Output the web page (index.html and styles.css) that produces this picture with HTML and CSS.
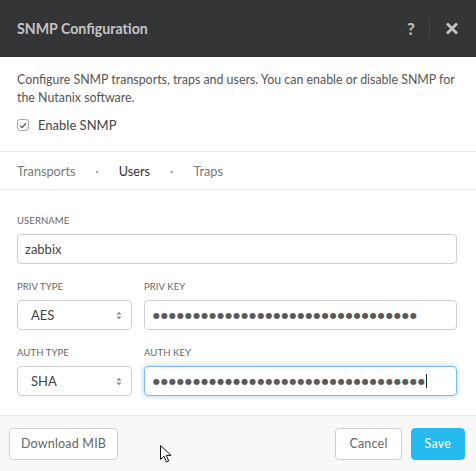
FILE: index.html
```html
<!DOCTYPE html>
<html>
<head>
<meta charset="utf-8">
<link rel="stylesheet" href="styles.css">
</head>
<body>
<div class="dialog">
  <div class="header">
    <div class="title">SNMP Configuration</div>
    <div class="actions">
      <span class="help">?</span>
      <span class="vsep"></span>
      <svg class="close" width="14" height="13" viewBox="0 0 14 13"><path d="M2 1.5 L12 11.5 M12 1.5 L2 11.5" stroke="#c4c5c7" stroke-width="2.8" stroke-linecap="butt"/></svg>
    </div>
  </div>
  <div class="intro">
    <p class="desc">Configure SNMP transports, traps and users. You can enable or disable SNMP for the Nutanix software.</p>
    <label class="check">
      <span class="box"><svg width="8" height="7" viewBox="0 0 8 7"><path d="M1 3.6 L3 5.6 L7 1.2" fill="none" stroke="#555" stroke-width="1.3"/></svg></span>
      <span>Enable SNMP</span>
    </label>
  </div>
  <div class="tabs">
    <span class="tab">Transports</span>
    <span class="dot">·</span>
    <span class="tab active">Users</span>
    <span class="dot">·</span>
    <span class="tab">Traps</span>
  </div>
  <div class="form">
    <div class="field">
      <div class="label">USERNAME</div>
      <div class="input">zabbix</div>
    </div>
    <div class="row">
      <div class="field small">
        <div class="label">PRIV TYPE</div>
        <div class="select"><span>AES</span><svg width="6" height="9" viewBox="0 0 6 9"><path d="M0.5 3.5 L3 0.8 L5.5 3.5 Z M0.5 5.5 L3 8.2 L5.5 5.5 Z" fill="#888"/></svg></div>
      </div>
      <div class="field grow">
        <div class="label">PRIV KEY</div>
        <div class="input pw">●●●●●●●●●●●●●●●●●●●●●●●●●●●●●●●●●</div>
      </div>
    </div>
    <div class="row">
      <div class="field small">
        <div class="label">AUTH TYPE</div>
        <div class="select"><span>SHA</span><svg width="6" height="9" viewBox="0 0 6 9"><path d="M0.5 3.5 L3 0.8 L5.5 3.5 Z M0.5 5.5 L3 8.2 L5.5 5.5 Z" fill="#888"/></svg></div>
      </div>
      <div class="field grow">
        <div class="label">AUTH KEY</div>
        <div class="input pw focus">●●●●●●●●●●●●●●●●●●●●●●●●●●●●●●●●●●<span class="caret"></span></div>
      </div>
    </div>
  </div>
  <div class="footer">
    <button class="btn dl">Download MIB</button>
    <div class="right">
      <button class="btn">Cancel</button>
      <button class="btn primary">Save</button>
    </div>
    <svg class="cursor" width="13" height="19" viewBox="0 0 13 19"><path d="M0.5 0.5 L0.5 14.5 L4 11.2 L6.5 17 L8.7 16 L6.3 10.4 L11 10.4 Z" fill="#fff" stroke="#111" stroke-width="1"/></svg>
  </div>
</div>
</body>
</html>
```

FILE: styles.css
```css
* { box-sizing: border-box; }
html, body { margin: 0; padding: 0; }
body {
  width: 476px;
  height: 471px;
  background: #fff;
  font-family: Lato, "Open Sans", sans-serif;
  color: #4a4a4a;
  overflow: hidden;
}
.dialog { display: flex; flex-direction: column; height: 471px; }
.header {
  height: 57px;
  background: #333436;
  display: flex;
  align-items: center;
  justify-content: space-between;
  padding: 0 17px 0 17px;
  flex-shrink: 0;
}
.title { color: #c4c5c7; font-weight: 700; font-size: 14.2px; }
.actions { display: flex; align-items: center; }
.help { color: #b9b9b9; font-weight: 900; font-size: 17px; width: 12px; }
.vsep { width: 1px; height: 21px; background: #46474a; margin: 0 15px 0 10px; }
.close { display: block; }
.intro { padding: 14px 17px 18px; }
.desc { margin: 0; font-size: 12.4px; line-height: 18px; color: #555; }
.check { display: flex; align-items: center; margin-top: 10px; font-size: 13px; color: #444; }
.box {
  width: 12px; height: 12px; border: 1px solid #a9a9a9; border-radius: 3px;
  display: flex; align-items: center; justify-content: center; margin-right: 9px;
}
.box svg { display: block; }
.tabs {
  height: 39px;
  border-top: 1px solid #e8e8e8;
  border-bottom: 1px solid #e8e8e8;
  display: flex; align-items: center;
  padding: 0 17px;
  font-size: 12.7px;
}
.tab { color: #777; }
.tab.active { color: #333; }
.dot { color: #888; margin: 0 20px; }
.form { padding: 26px 19px 0 17px; flex: 1; }
.field { display: flex; flex-direction: column; min-width: 0; }
.label { font-size: 9.5px; color: #666; letter-spacing: 0.1px; height: 18px; line-height: 10px; }
.input {
  height: 30px; border: 1px solid #cfcfcf; border-radius: 4px;
  display: flex; align-items: center; padding: 0 7px;
  font-size: 13px; color: #444;
  overflow: hidden; white-space: nowrap;
}
.row { display: flex; gap: 12px; margin-top: 18px; }
.small { width: 115px; flex-shrink: 0; }
.grow { flex: 1; }
.select {
  height: 30px; border: 1px solid #cfcfcf; border-radius: 4px;
  display: flex; align-items: center; justify-content: space-between;
  padding: 0 9px 0 13px; font-size: 13px; color: #444;
}
.select svg { display: block; }
.pw { font-family: "DejaVu Sans", sans-serif; font-size: 8px; letter-spacing: 1.05px; color: #5a5a5a; padding-left: 8px; }
.focus { border-color: #7fb8ea; box-shadow: 0 0 4px 1px rgba(120, 180, 240, 0.45); }
.caret { display: inline-block; width: 1px; height: 14px; background: #222; margin-left: 0; }
.footer {
  position: relative;
  height: 56px;
  border-top: 1px solid #e6e6e6;
  background: #f8f8f8;
  display: flex; align-items: center; justify-content: space-between;
  padding: 0 11px 0 9px;
  flex-shrink: 0;
}
.right { display: flex; gap: 9px; }
.btn {
  height: 32px; border: 1px solid #cdd0d3; border-radius: 4px;
  background: #fff; color: #666; font-family: Lato, "Open Sans", sans-serif;
  font-size: 12.5px; padding: 0 13px; letter-spacing: 0.2px;
  white-space: nowrap;
}
.btn.dl { padding: 0; width: 109px; }
.btn.primary { background: #26bbef; border-color: #26bbef; color: #fff; padding: 0 13px; }
.cursor { position: absolute; left: 160px; top: 29px; }
```
